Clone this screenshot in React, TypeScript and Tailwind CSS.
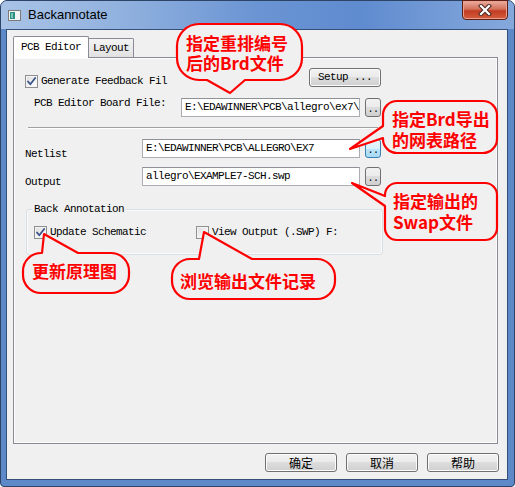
import React from "react";

const mono = "font-['Liberation_Mono',monospace] text-[11px] tracking-[-0.6px] text-black";
const cjk = "font-['Noto_Sans_CJK_SC',sans-serif]";

function Checkbox({ checked }: { checked?: boolean }) {
  return (
    <div className="flex h-[13px] w-[13px] shrink-0 items-center justify-center border border-[#8f8f8f] bg-[linear-gradient(135deg,#dadada,#f4f4f4_60%,#ffffff)] shadow-[inset_0_0_0_1px_#f4f4f4]">
      {checked && (
        <svg width="11" height="11" viewBox="0 0 11 11">
          <path d="M2 5.5 L4.3 8.3 L9.2 2" fill="none" stroke="#3a5289" strokeWidth="1.8" strokeLinecap="round" strokeLinejoin="round" />
        </svg>
      )}
    </div>
  );
}

function WinButton({ children, className = "" }: { children: React.ReactNode; className?: string }) {
  return (
    <div
      className={
        "flex shrink-0 items-center justify-center rounded-[3px] border border-[#707070] bg-[linear-gradient(#f2f2f2,#ebebeb_45%,#dddddd_50%,#cfcfcf)] shadow-[inset_0_0_0_1px_#fbfbfb] " +
        className
      }
    >
      {children}
    </div>
  );
}

function TextBox({ value, className = "" }: { value: string; className?: string }) {
  return (
    <div
      className={
        "h-[19px] shrink-0 overflow-hidden whitespace-nowrap border border-[#abadb3] border-t-[#8e9196] bg-white pl-[3px] leading-[17px] " +
        className
      }
    >
      {value}
    </div>
  );
}

function DotsButton({ focused }: { focused?: boolean }) {
  return (
    <div
      className={
        "ml-[5px] flex h-[19px] w-[16px] shrink-0 items-end justify-center rounded-[3px] border pb-[2px] text-[10px] leading-[8px] " +
        (focused
          ? "border-[#3c7fb1] bg-[linear-gradient(#eaf6fd,#d9f0fc_50%,#bee6fd_50%,#a7d9f5)]"
          : "border-[#707070] bg-[linear-gradient(#f2f2f2,#ebebeb_45%,#dddddd_50%,#cfcfcf)]")
      }
    >
      ..
    </div>
  );
}

type Tail = { side: "top" | "bottom" | "left"; a: number; b: number; tx: number; ty: number };

function bubble(x: number, y: number, w: number, h: number, r: number, t: Tail) {
  const R = x + w;
  const B = y + h;
  const top = t.side === "top" ? `L${t.a},${y} L${t.tx},${t.ty} L${t.b},${y} ` : "";
  const bottom = t.side === "bottom" ? `L${t.b},${B} L${t.tx},${t.ty} L${t.a},${B} ` : "";
  const left = t.side === "left" ? `L${x},${t.b} L${t.tx},${t.ty} L${x},${t.a} ` : "";
  return `M${x + r},${y} ${top}L${R - r},${y} A${r},${r} 0 0 1 ${R},${y + r} L${R},${B - r} A${r},${r} 0 0 1 ${R - r},${B} ${bottom}L${x + r},${B} A${r},${r} 0 0 1 ${x},${B - r} ${left}L${x},${y + r} A${r},${r} 0 0 1 ${x + r},${y} Z`;
}

const bubbles = [
  bubble(177, 24, 125, 56, 22, { side: "bottom", a: 207, b: 245, tx: 230, ty: 93 }),
  bubble(383, 101, 114, 52, 14, { side: "left", a: 126, b: 138, tx: 350, ty: 149 }),
  bubble(385, 183, 112, 57, 12, { side: "left", a: 196, b: 206, tx: 352, ty: 183 }),
  bubble(23, 253, 106, 40, 18, { side: "top", a: 42, b: 78, tx: 44, ty: 234 }),
  bubble(172, 259, 163, 40, 18, { side: "top", a: 199, b: 252, tx: 204, ty: 232 }),
];

export default function App() {
  return (
    <div className="relative h-[487px] w-[515px] bg-white">
      {/* Window frame */}
      <div className="flex h-[487px] w-[515px] flex-col rounded-t-[7px] rounded-b-[4px] border border-[#2d4466] bg-[#5d89c9]">
        {/* Title bar */}
        <div className="flex h-[28px] items-center rounded-t-[6px] bg-[linear-gradient(90deg,#a9c3e6_0%,#8fb0de_25%,#6a94d3_50%,#5f8bcf_70%,#86a9dc_100%)]">
          <svg className="ml-[7px]" width="13" height="11" viewBox="0 0 13 11">
            <rect x="0.5" y="0.5" width="12" height="10" fill="#f4f4f4" stroke="#7a7a7a" />
            <rect x="2" y="2" width="5" height="7" fill="#2f8f84" />
            <rect x="3" y="3" width="2" height="5" fill="#7cc7b4" />
          </svg>
          <span className="ml-[7px] font-['Liberation_Sans',sans-serif] text-[13px] text-black">Backannotate</span>
          <div className="mr-[6px] ml-auto -mt-px flex h-[20px] w-[46px] items-center justify-center self-start rounded-b-[4px] border border-[#5a1f16] bg-[linear-gradient(#ebaea1,#d4705a_45%,#c13c22_55%,#d65d3e)] shadow-[inset_0_0_0_1px_#eea08e]">
            <svg width="14" height="12" viewBox="0 0 14 12">
              <path d="M3 2 L11 10 M11 2 L3 10" stroke="#4a2a22" strokeWidth="4.2" strokeLinecap="square" />
              <path d="M3 2 L11 10 M11 2 L3 10" stroke="#ffffff" strokeWidth="2.2" strokeLinecap="square" />
            </svg>
          </div>
        </div>

        {/* Client area */}
        <div className="mr-[6px] mb-[6px] ml-[5px] flex flex-1 flex-col border border-[#34507a] bg-[#f0f0f0] pt-[6px] pr-[9px] pl-[6px]">
          {/* Tabs */}
          <div className={"flex h-[21px] items-end " + mono}>
            <div className="relative z-10 -mb-px flex h-[22px] w-[76px] items-center justify-center rounded-t-[2px] border border-b-0 border-[#898c95] bg-white">
              PCB Editor
            </div>
            <div className="flex h-[19px] w-[45px] items-center justify-center rounded-tr-[2px] border border-b-0 border-l-0 border-[#898c95] bg-[linear-gradient(#f4f4f4,#e1e1e1)]">
              Layout
            </div>
          </div>

          {/* Tab panel */}
          <div className={"h-[387px] border border-[#898c95] bg-[#f0f0f0] pt-[10px] shadow-[inset_0_0_0_1px_#fbfbfb] " + mono}>
            <div className="flex h-[19px]">
              <div className="ml-[11px] flex w-[284px] items-start pt-[7px]">
                <Checkbox checked />
                <span className="ml-[3px] leading-[13px]">Generate Feedback Fil</span>
              </div>
              <WinButton className="h-[19px] w-[72px]">Setup ...</WinButton>
            </div>

            <div className="mt-[11px] flex items-start">
              <span className="-mt-px ml-[20px] w-[147px] shrink-0 leading-[12px]">PCB Editor Board File:</span>
              <TextBox className="w-[179px]" value="E:\EDAWINNER\PCB\allegro\ex7\" />
              <DotsButton />
            </div>

            <div className="mt-[10px] ml-[14px] h-[2px] w-[350px] border-t border-b border-t-[#a0a0a0] border-b-white" />

            <div className="mt-[10px] flex items-start">
              <span className="ml-[11px] w-[117px] shrink-0 pt-[9px] leading-[12px]">Netlist</span>
              <TextBox className="w-[218px]" value="E:\EDAWINNER\PCB\ALLEGRO\EX7" />
              <DotsButton focused />
            </div>

            <div className="mt-[7px] flex items-start">
              <span className="ml-[11px] w-[117px] shrink-0 pt-[9px] leading-[12px]">Output</span>
              <TextBox className="w-[218px]" value="allegro\EXAMPLE7-SCH.swp" />
              <DotsButton />
            </div>

            {/* Back Annotation group */}
            <div className="relative mt-[21px] ml-[12px] h-[46px] w-[357px] rounded-[3px] border border-[#d5dfe5] shadow-[inset_0_0_0_1px_#fafafa]">
              <span className="absolute -top-[7px] left-[5px] bg-[#f0f0f0] px-[2px] leading-[12px]">Back Annotation</span>
              <div className="flex pt-[16px] pl-[7px]">
                <div className="flex w-[162px] items-center">
                  <Checkbox checked />
                  <span className="ml-[3px] leading-[13px]">Update Schematic</span>
                </div>
                <div className="flex items-center">
                  <Checkbox />
                  <span className="ml-[3px] leading-[13px]">View Output (.SWP) F:</span>
                </div>
              </div>
            </div>
          </div>

          {/* Dialog buttons */}
          <div className={"mt-[9px] -mr-px flex justify-end gap-[9px] text-[12px] text-black " + cjk}>
            <WinButton className="h-[19px] w-[72px]">确定</WinButton>
            <WinButton className="h-[19px] w-[72px]">取消</WinButton>
            <WinButton className="h-[19px] w-[72px]">帮助</WinButton>
          </div>
        </div>
      </div>

      {/* Red annotation callouts drawn over the dialog */}
      <svg className="pointer-events-none absolute top-0 left-0" width="515" height="487" viewBox="0 0 515 487">
        {bubbles.map((d, i) => (
          <path key={i} d={d} fill="#f0f0f0" stroke="#ff0000" strokeWidth="2.2" strokeLinejoin="round" />
        ))}
      </svg>
      <div className={"absolute top-[33px] left-[186px] text-[17px] leading-[20px] font-bold text-[#ff0000] " + cjk}>
        指定重排编号
        <br />
        后的Brd文件
      </div>
      <div className={"absolute top-[108px] left-[392px] text-[17px] leading-[21px] font-bold text-[#ff0000] " + cjk}>
        指定Brd导出
        <br />
        的网表路径
      </div>
      <div className={"absolute top-[190px] left-[393px] text-[17px] leading-[21px] font-bold text-[#ff0000] " + cjk}>
        指定输出的
        <br />
        Swap文件
      </div>
      <div className={"absolute top-[261px] left-[32px] text-[17px] leading-[20px] font-bold text-[#ff0000] " + cjk}>
        更新原理图
      </div>
      <div className={"absolute top-[271px] left-[180px] text-[17px] leading-[20px] font-bold text-[#ff0000] " + cjk}>
        浏览输出文件记录
      </div>
    </div>
  );
}
